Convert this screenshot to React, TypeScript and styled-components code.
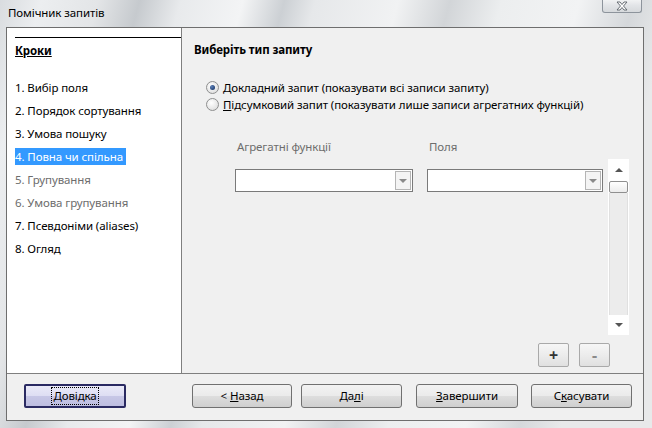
import React from "react";
import styled, { createGlobalStyle, css } from "styled-components";

const Global = createGlobalStyle`
  html, body { margin: 0; padding: 0; }
  body {
    width: 652px; height: 428px; overflow: hidden;
    font-family: "Noto Sans", "Open Sans", sans-serif;
    font-size: 11.5px; letter-spacing: -0.1px; color: #000;
  }
  #root { width: 652px; height: 428px; }
`;

const Window = styled.div`
  width: 652px;
  height: 428px;
  box-sizing: border-box;
  display: flex;
  flex-direction: column;
  padding: 0 8px 7px 6px;
  background: linear-gradient(
    105deg,
    #d9dcdf 0px,
    #eceef0 40px,
    #e3e5e7 95px,
    #c6cace 135px,
    #e8eaec 175px,
    #f3f4f5 235px,
    #ccd0d4 275px,
    #e6e8ea 305px,
    #f1f2f3 385px,
    #d2d5d8 435px,
    #eceeef 485px,
    #f2f3f4 560px,
    #d5d8db 612px,
    #e8e9ea 652px
  );
`;

const TitleBar = styled.div`
  height: 27px;
  flex: none;
  display: flex;
  justify-content: space-between;
  align-items: flex-start;
`;

const TitleText = styled.div`
  margin: 5px 0 0 2px;
  font-size: 11.5px;
  line-height: 16px;
  color: #000;
`;

const CloseBtn = styled.div`
  margin-right: 2px;
  margin-top: -1px;
  width: 40px;
  height: 14px;
  box-sizing: border-box;
  border: 1px solid #8d949c;
  border-top: none;
  border-radius: 0 0 3px 3px;
  background: linear-gradient(#f4f5f6, #e2e4e7 50%, #d6d9dc);
  display: flex;
  align-items: center;
  justify-content: center;
`;

const Client = styled.div`
  flex: 1;
  display: flex;
  flex-direction: column;
  border: 1px solid #6e6e6e;
  background: #f0f0f0;
`;

const Main = styled.div`
  height: 345px;
  display: flex;
  border-bottom: 1px solid #7f7f7f;
`;

const LeftPanel = styled.div`
  width: 174px;
  flex: none;
  background: #fff;
  border-right: 1px solid #7f7f7f;
  padding-top: 9px;
  box-sizing: content-box;
`;

const StepsHeader = styled.div`
  margin-left: 8px;
  border-top: 1px solid #000;
  padding: 4px 0 0 0;
  line-height: 18px;
  font-weight: bold;
  text-decoration: underline;
`;

const StepList = styled.div`
  margin-top: 19px;
  margin-left: 8px;
  display: flex;
  flex-direction: column;
  gap: 6px;
  align-items: flex-start;
`;

const Step = styled.div<{ $state?: "active" | "disabled" }>`
  line-height: 17px;
  height: 17px;
  white-space: nowrap;
  ${(p) =>
    p.$state === "active" &&
    css`
      background: #3399ff;
      color: #fff;
      padding-right: 3px;
    `}
  ${(p) =>
    p.$state === "disabled" &&
    css`
      color: #6d6d6d;
    `}
`;

const RightPanel = styled.div`
  flex: 1;
  display: flex;
  flex-direction: column;
  padding: 14px 0 0 12px;
`;

const PanelTitle = styled.div`
  font-weight: bold;
  line-height: 16px;
`;

const RadioGroup = styled.div`
  margin-top: 21px;
  padding-left: 12px;
  display: flex;
  flex-direction: column;
`;

const RadioRow = styled.label`
  display: flex;
  align-items: center;
  height: 17px;
  gap: 4px;
`;

const RadioCircle = styled.span<{ $checked?: boolean }>`
  width: 11px;
  height: 11px;
  border-radius: 50%;
  border: 1px solid #8e8f8f;
  background: radial-gradient(circle at 40% 35%, #ffffff, #e3e3e3 70%, #d0d0d0);
  display: flex;
  align-items: center;
  justify-content: center;
  flex: none;
  &::after {
    content: "";
    display: ${(p) => (p.$checked ? "block" : "none")};
    width: 5px;
    height: 5px;
    border-radius: 50%;
    background: radial-gradient(circle at 35% 35%, #5a7fb8, #0f2a5a);
  }
`;

const U = styled.span`
  text-decoration: underline;
`;

const FieldsArea = styled.div`
  margin-top: 26px;
  padding-left: 41px;
  display: flex;
  align-items: flex-start;
`;

const FieldColumn = styled.div<{ $w: number; $gap: number }>`
  width: ${(p) => p.$w}px;
  margin-right: ${(p) => p.$gap}px;
  display: flex;
  flex-direction: column;
`;

const FieldLabel = styled.div`
  padding-left: 2px;
  line-height: 16px;
  color: #6d6d6d;
  margin-bottom: 14px;
`;

const Combo = styled.div`
  height: 23px;
  box-sizing: border-box;
  border: 1px solid #7a7a7a;
  background: #fff;
  display: flex;
  justify-content: flex-end;
  align-items: center;
  padding-right: 1px;
`;

const ComboButton = styled.div`
  width: 16px;
  height: 19px;
  box-sizing: border-box;
  border: 1px solid #b5b5b5;
  background: #f4f4f4;
  display: flex;
  align-items: center;
  justify-content: center;
`;

const TriDown = styled.span<{ $color?: string }>`
  width: 0;
  height: 0;
  border-left: 4px solid transparent;
  border-right: 4px solid transparent;
  border-top: 4px solid ${(p) => p.$color || "#8a8a8a"};
`;

const TriUp = styled.span`
  width: 0;
  height: 0;
  border-left: 4px solid transparent;
  border-right: 4px solid transparent;
  border-bottom: 4px solid #555;
`;

const ScrollBar = styled.div`
  width: 21px;
  height: 176px;
  margin-top: 20px;
  display: flex;
  flex-direction: column;
  background: #fff;
  flex: none;
`;

const ScrollArrow = styled.div<{ $h: number }>`
  height: ${(p) => p.$h}px;
  display: flex;
  align-items: center;
  justify-content: center;
  flex: none;
`;

const Thumb = styled.div`
  height: 12px;
  margin: 0 1px;
  box-sizing: border-box;
  border: 1px solid #8f8f8f;
  border-radius: 2px;
  background: linear-gradient(#ffffff, #ececec);
  flex: none;
`;

const Track = styled.div`
  flex: 1;
  margin: 0 1px;
  background: #ececec;
  border-left: 1px solid #e0e0e0;
  border-right: 1px solid #e0e0e0;
`;

const AddRemoveRow = styled.div`
  margin-top: 8px;
  padding-right: 33px;
  display: flex;
  justify-content: flex-end;
  gap: 10px;
`;

const SmallBtn = styled.div`
  width: 31px;
  height: 24px;
  box-sizing: border-box;
  border: 1px solid #a9a9a9;
  border-radius: 2px;
  background: linear-gradient(#f6f6f6, #ececec 50%, #e0e0e0);
  display: flex;
  align-items: center;
  justify-content: center;
  font-size: 16px;
  font-weight: bold;
  color: #333;
`;

const SmallBtnDisabled = styled(SmallBtn)`
  color: #8a8a8a;
`;

const BottomBar = styled.div`
  flex: 1;
  display: flex;
  align-items: flex-start;
  padding: 10px 11px 0 17px;
`;

const NavGroup = styled.div`
  margin-left: auto;
  display: flex;
`;

const Btn = styled.div<{ $w: number; $ml?: number; $default?: boolean }>`
  width: ${(p) => p.$w}px;
  margin-left: ${(p) => p.$ml || 0}px;
  height: 24px;
  box-sizing: border-box;
  border: 1px solid #707070;
  border-radius: 3px;
  background: linear-gradient(#f2f2f2 0%, #ebebeb 48%, #dddddd 52%, #cfcfcf 100%);
  display: flex;
  align-items: center;
  justify-content: center;
  line-height: 16px;
  ${(p) =>
    p.$default &&
    css`
      border: 2px solid #2a2a62;
      border-radius: 2px;
      background: linear-gradient(#eaeaf8 0%, #dedef3 48%, #c7c7e6 52%, #bdbde0 100%);
    `}
`;

const BtnLabel = styled.span<{ $focus?: boolean }>`
  white-space: pre;
  padding: 0 1px;
  ${(p) =>
    p.$focus &&
    css`
      outline: 1px dotted #000;
    `}
`;

const CloseIcon = () => (
  <svg width="14" height="10" viewBox="0 0 14 10">
    <path
      d="M2 1 L5 1 L7 3.5 L9 1 L12 1 L8.5 5 L12 9 L9 9 L7 6.5 L5 9 L2 9 L5.5 5 Z"
      fill="#ffffff"
      stroke="#5a6068"
      strokeWidth="0.9"
      strokeLinejoin="round"
    />
  </svg>
);

export default function App() {
  return (
    <>
      <Global />
      <Window>
        <TitleBar>
          <TitleText>Помічник запитів</TitleText>
          <CloseBtn>
            <CloseIcon />
          </CloseBtn>
        </TitleBar>
        <Client>
          <Main>
            <LeftPanel>
              <StepsHeader>Кроки</StepsHeader>
              <StepList>
                <Step>1. Вибір поля</Step>
                <Step>2. Порядок сортування</Step>
                <Step>3. Умова пошуку</Step>
                <Step $state="active">4. Повна чи спільна</Step>
                <Step $state="disabled">5. Групування</Step>
                <Step $state="disabled">6. Умова групування</Step>
                <Step>7. Псевдоніми (aliases)</Step>
                <Step>8. Огляд</Step>
              </StepList>
            </LeftPanel>
            <RightPanel>
              <PanelTitle>Виберіть тип запиту</PanelTitle>
              <RadioGroup>
                <RadioRow>
                  <RadioCircle $checked />
                  <span>
                    <U>Д</U>окладний запит (показувати всі записи запиту)
                  </span>
                </RadioRow>
                <RadioRow>
                  <RadioCircle />
                  <span>
                    <U>П</U>ідсумковий запит (показувати лише записи агрегатних функцій)
                  </span>
                </RadioRow>
              </RadioGroup>
              <FieldsArea>
                <FieldColumn $w={178} $gap={14}>
                  <FieldLabel>Агрегатні функції</FieldLabel>
                  <Combo>
                    <ComboButton>
                      <TriDown />
                    </ComboButton>
                  </Combo>
                </FieldColumn>
                <FieldColumn $w={176} $gap={5}>
                  <FieldLabel>Поля</FieldLabel>
                  <Combo>
                    <ComboButton>
                      <TriDown />
                    </ComboButton>
                  </Combo>
                </FieldColumn>
                <ScrollBar>
                  <ScrollArrow $h={22}>
                    <TriUp />
                  </ScrollArrow>
                  <Thumb />
                  <Track />
                  <ScrollArrow $h={20}>
                    <TriDown $color="#555" />
                  </ScrollArrow>
                </ScrollBar>
              </FieldsArea>
              <AddRemoveRow>
                <SmallBtn>+</SmallBtn>
                <SmallBtnDisabled>-</SmallBtnDisabled>
              </AddRemoveRow>
            </RightPanel>
          </Main>
          <BottomBar>
            <Btn $w={102} $default>
              <BtnLabel $focus>
                <U>Д</U>овідка
              </BtnLabel>
            </Btn>
            <NavGroup>
              <Btn $w={100}>
                <BtnLabel>
                  {"< "}
                  <U>Н</U>азад
                </BtnLabel>
              </Btn>
              <Btn $w={101} $ml={9}>
                <BtnLabel>
                  Да<U>л</U>і
                </BtnLabel>
              </Btn>
              <Btn $w={102} $ml={14}>
                <BtnLabel>
                  <U>З</U>авершити
                </BtnLabel>
              </Btn>
              <Btn $w={101} $ml={13}>
                <BtnLabel>
                  С<U>к</U>асувати
                </BtnLabel>
              </Btn>
            </NavGroup>
          </BottomBar>
        </Client>
      </Window>
    </>
  );
}
